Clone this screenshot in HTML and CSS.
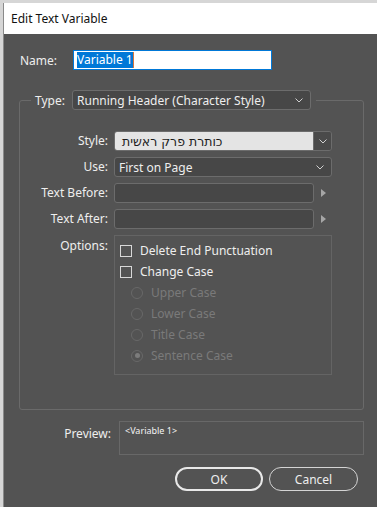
FILE: index.html
```html
<!DOCTYPE html>
<html lang="en">
<head>
  <meta charset="UTF-8">
  <title>Edit Text Variable</title>
  <link rel="stylesheet" href="styles.css">
</head>
<body>
  <div class="dialog">
    <div class="titlebar">Edit Text Variable</div>

    <div class="content">
      <div class="name-row">
        <label class="name-label">Name:</label>
        <div class="name-input"><span class="selection">Variable 1</span><span class="caret"></span></div>
      </div>

      <fieldset class="group">
        <legend class="type-row">
          <span class="type-label">Type:</span>
          <div class="select type-select">
            <span class="select-value">Running Header (Character Style)</span>
            <svg class="chevron" width="8" height="5" viewBox="0 0 8 5"><polyline points="0.5,0.5 4,4 7.5,0.5" fill="none" stroke="#d0d0d0" stroke-width="1"/></svg>
          </div>
        </legend>

        <div class="form-grid">
          <label class="field-label">Style:</label>
          <div class="light-select">
            <div class="light-value"><span class="hebrew" dir="rtl">כותרת פרק ראשית</span></div>
            <span class="drop-btn">
              <svg class="chevron" width="8" height="5" viewBox="0 0 8 5"><polyline points="0.5,0.5 4,4 7.5,0.5" fill="none" stroke="#d0d0d0" stroke-width="1"/></svg>
            </span>
          </div>

          <label class="field-label">Use:</label>
          <div class="select">
            <span class="select-value">First on Page</span>
            <svg class="chevron" width="8" height="5" viewBox="0 0 8 5"><polyline points="0.5,0.5 4,4 7.5,0.5" fill="none" stroke="#d0d0d0" stroke-width="1"/></svg>
          </div>

          <label class="field-label">Text Before:</label>
          <div class="text-field">
            <div class="text-input"></div>
            <span class="arrow"></span>
          </div>

          <label class="field-label">Text After:</label>
          <div class="text-field">
            <div class="text-input"></div>
            <span class="arrow"></span>
          </div>

          <label class="field-label options-label">Options:</label>
          <div class="options-box">
            <div class="option"><span class="checkbox"></span>Delete End Punctuation</div>
            <div class="option"><span class="checkbox"></span>Change Case</div>
            <div class="option radio-option"><span class="radio"></span>Upper Case</div>
            <div class="option radio-option"><span class="radio"></span>Lower Case</div>
            <div class="option radio-option"><span class="radio"></span>Title Case</div>
            <div class="option radio-option"><span class="radio checked"></span>Sentence Case</div>
          </div>
        </div>
      </fieldset>

      <div class="preview-row">
        <label class="preview-label">Preview:</label>
        <div class="preview-box">&lt;Variable 1&gt;</div>
      </div>

      <div class="buttons">
        <button class="btn btn-default">OK</button>
        <button class="btn">Cancel</button>
      </div>
    </div>
  </div>
</body>
</html>
```

FILE: styles.css
```css
:root {
  --dialog-bg: #535353;
  --field-bg: #474747;
  --field-border: #6c6c6c;
  --group-border: #6a6a6a;
  --text-main: #eeeeee;
  --text-disabled: #7a7a7a;
}

* {
  box-sizing: border-box;
  margin: 0;
  padding: 0;
}

body {
  font-family: "Noto Sans", "DejaVu Sans", sans-serif;
  font-size: 12px;
  background-color: #d6d6d6;
  padding: 3px 0 0 3px;
  height: 507px;
  overflow: hidden;
}

.dialog {
  width: 374px;
  height: 504px;
  background-color: var(--dialog-bg);
  color: var(--text-main);
  border-left: 1px solid #8a8a8a;
}

.titlebar {
  height: 31px;
  line-height: 31px;
  padding-left: 7px;
  background-color: #ffffff;
  color: #111111;
}

.content {
  padding: 0 0 0 15px;
}

/* name */
.name-row {
  display: flex;
  align-items: center;
  margin-top: 16px;
}

.name-label {
  width: 54px;
  padding-left: 1px;
}

.name-input {
  width: 199px;
  height: 20px;
  display: flex;
  align-items: center;
  padding-left: 3px;
  background-color: #ffffff;
  border: 1px solid #0078d7;
}

.selection {
  background-color: #0078d7;
  color: #ffffff;
  line-height: 16px;
}

.caret {
  width: 1px;
  height: 16px;
  background-color: #d9743a;
}

/* group box */
.group {
  width: 345px;
  margin-top: 20px;
  border: 1px solid var(--group-border);
  border-radius: 3px;
  padding: 0;
}

.type-row {
  display: flex;
  align-items: center;
  margin-left: 11px;
  padding: 0 5px 0 4px;
}

.type-label {
  width: 37px;
}

.select {
  display: flex;
  align-items: center;
  justify-content: space-between;
  height: 20px;
  padding: 0 7px 0 4px;
  background-color: var(--field-bg);
  border: 1px solid var(--field-border);
  border-radius: 3px;
}

.type-select {
  width: 239px;
}

.chevron {
  display: block;
}

.form-grid {
  display: grid;
  grid-template-columns: 88px 218px;
  column-gap: 6px;
  row-gap: 6px;
  margin: 21px 0 34px 0;
}

.form-grid .select,
.light-select,
.text-field {
  height: 20px;
}

.field-label {
  text-align: right;
  line-height: 20px;
}

.light-select {
  display: flex;
  border: 1px solid var(--field-border);
  border-radius: 3px;
  overflow: hidden;
}

.light-value {
  flex: 1;
  display: flex;
  justify-content: flex-start;
  align-items: center;
  padding-left: 7px;
  background-color: #e4e4e4;
  color: #1c1c1c;
}

.hebrew {
  display: block;
  font-family: "DejaVu Sans", sans-serif;
  font-size: 12.5px;
}

.drop-btn {
  width: 18px;
  display: flex;
  align-items: center;
  justify-content: center;
  background-color: #4a4a4a;
  border-left: 1px solid var(--field-border);
}

.text-field {
  display: flex;
  align-items: center;
}

.text-input {
  width: 200px;
  height: 20px;
  background-color: var(--field-bg);
  border: 1px solid var(--field-border);
  border-radius: 3px;
}

.arrow {
  margin-left: 7px;
  width: 0;
  height: 0;
  border-top: 4px solid transparent;
  border-bottom: 4px solid transparent;
  border-left: 5px solid #a6a6a6;
}

/* options */
.options-label {
  align-self: start;
  padding-top: 1px;
}

.options-box {
  border: 1px solid #646464;
  padding: 4px 0 8px 0;
}

.option {
  display: flex;
  align-items: center;
  height: 21px;
  padding-left: 5px;
  gap: 8px;
}

.checkbox {
  width: 12px;
  height: 12px;
  border: 1px solid #d8d8d8;
}

.radio-option {
  padding-left: 16px;
  color: var(--text-disabled);
}

.radio {
  width: 12px;
  height: 12px;
  border: 1px solid #686868;
  border-radius: 50%;
  display: flex;
  align-items: center;
  justify-content: center;
}

.radio.checked::after {
  content: "";
  width: 5px;
  height: 5px;
  border-radius: 50%;
  background-color: #7c7c7c;
}

/* preview */
.preview-row {
  display: flex;
  margin-top: 11px;
}

.preview-label {
  width: 92px;
  text-align: right;
  padding-top: 4px;
}

.preview-box {
  width: 245px;
  height: 34px;
  margin-left: 8px;
  padding: 2px 5px;
  border: 1px solid #686868;
  font-size: 9px;
  color: #f4f4f4;
}

/* buttons */
.buttons {
  display: flex;
  gap: 6px;
  margin: 12px 0 0 156px;
}

.btn {
  width: 89px;
  height: 24px;
  font-family: inherit;
  font-size: 12px;
  color: var(--text-main);
  background-color: transparent;
  border: 1px solid #d4d4d4;
  border-radius: 12px;
}

.btn-default {
  width: 88px;
  border: 2px solid #e8e8e8;
}
```
